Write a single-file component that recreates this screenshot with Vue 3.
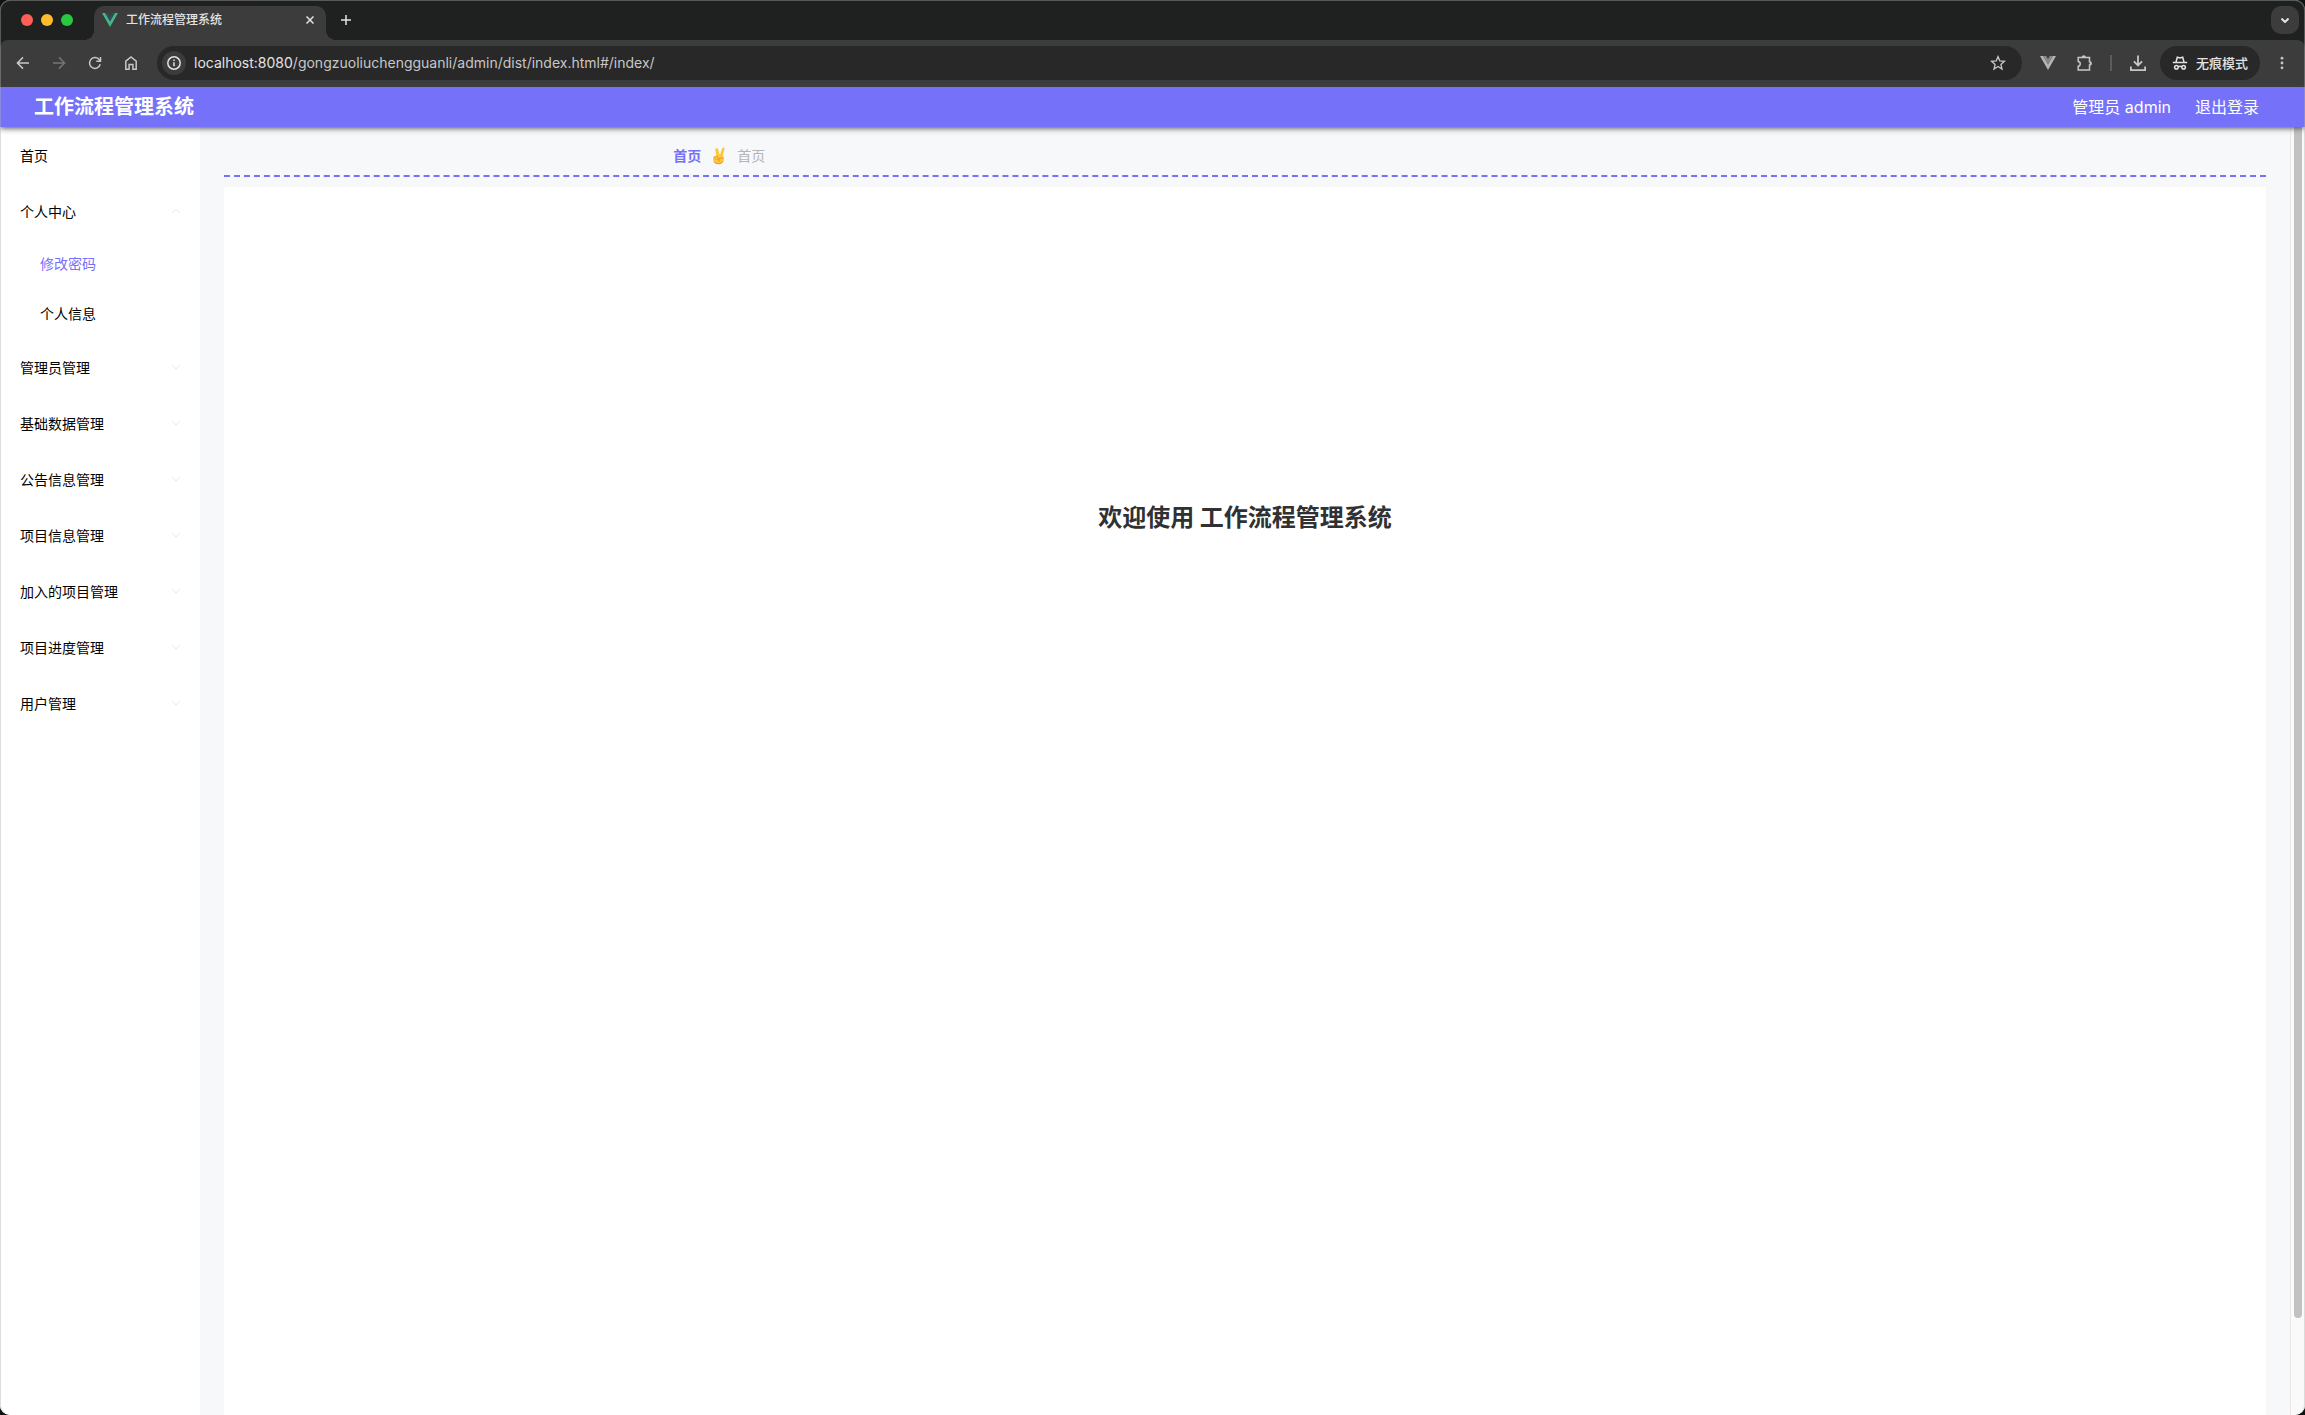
<template>
  <div class="desktop">
    <div class="window">
      <div class="tab-strip">
        <div class="lights">
          <button class="light red" type="button" aria-label="Close window"></button>
          <button class="light yellow" type="button" aria-label="Minimize window"></button>
          <button class="light green" type="button" aria-label="Zoom window"></button>
        </div>
        <div class="tab">
          <svg class="tab-logo" viewBox="0 0 16 14">
            <path d="M0 0h3.2L8 8.3 12.8 0H16L8 14z" fill="#41b883" />
            <path d="M3.2 0h3L8 3.2 9.8 0h3L8 8.3z" fill="#35495e" />
          </svg>
          <span class="tab-title">{{ systemName }}</span>
          <button class="tab-close" type="button" aria-label="Close tab">
            <svg width="8" height="8" viewBox="0 0 8 8">
              <path d="M.5.5l7 7M7.5.5l-7 7" />
            </svg>
          </button>
        </div>
        <button class="new-tab" type="button" aria-label="New tab">
          <svg width="10" height="10" viewBox="0 0 10 10">
            <path d="M5 0v10M0 5h10" />
          </svg>
        </button>
        <button class="tab-search" type="button" aria-label="Search tabs">
          <svg width="8" height="5" viewBox="0 0 8 5">
            <path d="M.5.5L4 4 7.5.5" />
          </svg>
        </button>
      </div>

      <div class="toolbar-wrap">
        <div class="toolbar">
          <button class="tool" type="button" aria-label="Back">
            <svg width="16" height="16" viewBox="0 0 16 16">
              <path d="M14 8H2.8M8 2.4L2.4 8 8 13.6" />
            </svg>
          </button>
          <button class="tool disabled" type="button" aria-label="Forward" disabled>
            <svg width="16" height="16" viewBox="0 0 16 16">
              <path d="M2 8h11.2M8 2.4L13.6 8 8 13.6" />
            </svg>
          </button>
          <button class="tool" type="button" aria-label="Reload">
            <svg width="16" height="16" viewBox="0 0 16 16">
              <path d="M13.2 9.3a5.4 5.4 0 1 1-1.3-5l1.6 1.6M13.5 2v4.2H9.3" />
            </svg>
          </button>
          <button class="tool" type="button" aria-label="Home">
            <svg width="16" height="16" viewBox="0 0 16 16">
              <path d="M2.8 14.2V6.1L8 2l5.2 4.1v8.1H9.9V9.4H6.1v4.8z" />
            </svg>
          </button>
          <div class="address">
            <button class="site-info" type="button" aria-label="Site information">
              <svg width="14" height="14" viewBox="0 0 14 14">
                <circle cx="7" cy="7" r="6.2" />
                <path d="M7 6.3v4M7 3.5v1.5" />
              </svg>
            </button>
            <div class="url"><span class="host">localhost:8080</span>/gongzuoliuchengguanli/admin/dist/index.html#/index/</div>
            <button class="tool star" type="button" aria-label="Bookmark">
              <svg width="16" height="16" viewBox="0 0 16 16">
                <path d="M8 1.6l1.8 4.3 4.7.4-3.6 3.1 1.1 4.6L8 11.5 4 14l1.1-4.6-3.6-3.1 4.7-.4z" />
              </svg>
            </button>
          </div>
          <button class="tool" type="button" aria-label="Vue devtools">
            <svg class="filled" width="16" height="14" viewBox="0 0 16 14">
              <path d="M0 0h3.2L8 8.3 12.8 0H16L8 14z" fill="#b4b4b4" />
              <path d="M3.2 0h3L8 3.2 9.8 0h3L8 8.3z" fill="#8a8a8a" />
            </svg>
          </button>
          <button class="tool" type="button" aria-label="Extensions">
            <svg width="18" height="18" viewBox="0 0 18 18">
              <path d="M3.2 3.6h11.3v4.2c2 0 2 3.2 0 3.2v4.9H3.2v-3.7c2.7-.2 2.7-4.6 0-4.8z" />
              <path class="solid" d="M6.7 3.4c0-2.9 4.2-2.9 4.2 0zM14.7 7.4c2.7 0 2.7 4 0 4z" />
            </svg>
          </button>
          <span class="divider"></span>
          <button class="tool download" type="button" aria-label="Downloads">
            <svg width="18" height="18" viewBox="0 0 18 18">
              <path d="M9 1.5v9.7M4.9 7.3L9 11.4l4.1-4.1M1.9 12.6v3.5h14.2v-3.5" />
            </svg>
          </button>
          <button class="incognito" type="button">
            <svg width="16" height="16" viewBox="0 0 16 16">
              <path d="M.8 7.6h14.4M3.9 7.4l1.4-5.2 2.7.8 2.7-.8 1.4 5.2M6.2 11.9c1-.7 2.6-.7 3.6 0" />
              <circle cx="4.4" cy="12.2" r="1.8" />
              <circle cx="11.6" cy="12.2" r="1.8" />
            </svg>
            无痕模式
          </button>
          <button class="tool menu-dots" type="button" aria-label="Menu">
            <svg class="filled" width="4" height="14" viewBox="0 0 4 14">
              <circle cx="2" cy="2.2" r="1.4" />
              <circle cx="2" cy="7" r="1.4" />
              <circle cx="2" cy="11.8" r="1.4" />
            </svg>
          </button>
        </div>
      </div>

      <header class="navbar">
        <h1 class="title">{{ systemName }}</h1>
        <div class="user">管理员 admin</div>
        <button class="logout" type="button">退出登录</button>
      </header>

      <div class="page">
        <nav class="sidebar">
          <a class="menu-item" href="#/index/">首页</a>
          <div v-for="menu in menus" :key="menu.name">
            <button
              class="menu-item"
              type="button"
              :aria-expanded="menu.name === openMenu"
              @click="toggleMenu(menu.name)"
            >
              {{ menu.name }}
              <svg
                class="arrow"
                :class="{ open: menu.name === openMenu }"
                width="10"
                height="6"
                viewBox="0 0 10 6"
              >
                <path d="M1 1l4 4 4-4" />
              </svg>
            </button>
            <template v-if="menu.name === openMenu">
              <a
                v-for="child in menu.children"
                :key="child"
                class="sub-item"
                :class="{ active: child === activeItem }"
                href="#/index/"
                @click.prevent="activeItem = child"
                >{{ child }}</a
              >
            </template>
          </div>
        </nav>

        <main class="main">
          <div class="breadcrumb">
            <a class="crumb-home" href="#/index/">首页</a>
            <svg class="hand" width="14" height="18" viewBox="0 0 14 18">
              <path
                d="M4.4 1.3c.9-.4 1.6.1 1.8.9l1.2 5 .9-.1 1.8-5.7c.3-.8 1-1.1 1.7-.8.7.2.9.9.7 1.6l-1.7 6.3c1 .8 1.4 1.9 1.2 3.4-.2 3.2-2.1 5.4-5.3 5.4-3.1 0-5.3-1.7-5.6-4.4-.2-1.5.1-2.9 1.2-3.5l2-.8-1.1-5.8c-.1-.7.4-1.3 1.2-1.5z"
                fill="#fdc83c"
              />
              <path
                d="M2.3 9.6l1.6 2.7M4.7 8.9l1.5 2.5M5 12.9c1.2-1.7 3.3-2.1 5.4-1.7M7.8 11.5c-.9 1.1-1 2.1-.8 3.1M2 15c2 2.2 6.4 2.4 8.6-.2"
                fill="none"
                stroke="#dd9030"
                stroke-width=".8"
                stroke-linecap="round"
              />
            </svg>
            <span class="crumb-current">首页</span>
          </div>
          <section class="content">
            <h2>欢迎使用 {{ systemName }}</h2>
          </section>
        </main>

        <div class="scrollbar">
          <div class="thumb"></div>
        </div>
      </div>
    </div>
  </div>
</template>

<script setup>
import { ref } from "vue";

const systemName = "工作流程管理系统";

const menus = [
  { name: "个人中心", children: ["修改密码", "个人信息"] },
  { name: "管理员管理" },
  { name: "基础数据管理" },
  { name: "公告信息管理" },
  { name: "项目信息管理" },
  { name: "加入的项目管理" },
  { name: "项目进度管理" },
  { name: "用户管理" }
];

const openMenu = ref("个人中心");
const activeItem = ref("修改密码");

function toggleMenu(name) {
  openMenu.value = openMenu.value === name ? "" : name;
}
</script>

<style>
body {
  margin: 0;
  background: #0c1512;
}
</style>

<style scoped>
.desktop {
  font-family: Inter, "Noto Sans CJK SC", sans-serif;
  font-size: 14px;
  color: #000;
}

.desktop * {
  box-sizing: border-box;
}

.window {
  position: relative;
  display: flex;
  flex-direction: column;
  min-height: 100vh;
  border-radius: 10px;
  overflow: hidden;
  background: #fff;
}

/* hairline around the window */
.window::after {
  content: "";
  position: absolute;
  inset: 0;
  z-index: 3;
  border: 1px solid rgba(170, 175, 172, 0.4);
  border-bottom: 0;
  border-radius: 10px;
  pointer-events: none;
}

button {
  margin: 0;
  padding: 0;
  border: 0;
  background: none;
  font: inherit;
  color: inherit;
  cursor: pointer;
}

a {
  color: inherit;
  text-decoration: none;
}

svg {
  flex: none;
  fill: none;
  stroke: currentColor;
  stroke-width: 1.5;
}

svg.filled {
  fill: currentColor;
  stroke: none;
}

.tab-strip {
  display: flex;
  align-items: center;
  height: 40px;
  padding-right: 6px;
  background: #1f2120;
  color: #e3e3e3;
}

.lights {
  display: flex;
  gap: 8px;
  width: 94px;
  padding-left: 21px;
}

.light {
  width: 12px;
  height: 12px;
  border-radius: 50%;
}

.red {
  background: #ff5f57;
}

.yellow {
  background: #febc2e;
}

.green {
  background: #28c840;
}

.tab {
  position: relative;
  display: flex;
  align-items: center;
  align-self: flex-end;
  width: 232px;
  height: 34px;
  padding: 0 8px 6px;
  border-radius: 10px 10px 0 0;
  background: #3c3c3c;
}

/* flared feet of the active tab */
.tab::before,
.tab::after {
  content: "";
  position: absolute;
  bottom: 0;
  width: 10px;
  height: 10px;
}

.tab::before {
  right: 100%;
  background: radial-gradient(circle at 0 0, transparent 10px, #3c3c3c 10px);
}

.tab::after {
  left: 100%;
  background: radial-gradient(circle at 100% 0, transparent 10px, #3c3c3c 10px);
}

.tab-logo {
  width: 16px;
  height: 14px;
  stroke: none;
}

.tab-title {
  flex: 1;
  margin-left: 8px;
  font-size: 12px;
  line-height: 16px;
  font-weight: 500;
}

.tab-close,
.new-tab {
  display: flex;
  align-items: center;
  justify-content: center;
  width: 16px;
  height: 16px;
}

.new-tab {
  margin-left: 12px;
}

.tab-search {
  display: flex;
  align-items: center;
  justify-content: center;
  width: 28px;
  height: 28px;
  margin-left: auto;
  border-radius: 10px;
  background: #3c3c3c;
}

.tab-search svg {
  stroke-width: 2;
}

.toolbar-wrap {
  background: #1f2120;
}

.toolbar {
  display: flex;
  align-items: center;
  height: 47px;
  padding: 0 5px 2px;
  border-radius: 8px 8px 0 0;
  background: #3c3c3c;
  color: #c7c7c7;
}

.tool {
  display: flex;
  flex: none;
  align-items: center;
  justify-content: center;
  width: 36px;
  height: 36px;
}

.tool .solid {
  fill: currentColor;
  stroke: none;
}

.disabled {
  color: #757575;
}

.address {
  display: flex;
  flex: 1;
  align-items: center;
  height: 34px;
  margin: 0 8px;
  padding: 0 6px 0 5px;
  border-radius: 17px;
  background: #282828;
}

.site-info {
  display: flex;
  align-items: center;
  justify-content: center;
  width: 24px;
  height: 24px;
  border-radius: 50%;
  background: #3c3c3c;
  color: #e3e3e3;
}

.url {
  flex: 1;
  margin-left: 8px;
  line-height: 20px;
}

.host {
  color: #e3e3e3;
}

.star svg {
  stroke-width: 1.3;
}

.divider {
  width: 2px;
  height: 16px;
  margin: 0 8px;
  background: #5c5c5c;
}

.download svg {
  stroke-width: 1.8;
}

.incognito {
  display: flex;
  align-items: center;
  gap: 8px;
  height: 34px;
  margin: 0 4px;
  padding: 0 12px;
  border-radius: 17px;
  background: #282828;
  color: #e3e3e3;
  font-size: 13px;
  font-weight: 500;
}

.navbar {
  position: relative;
  z-index: 2;
  display: flex;
  align-items: center;
  gap: 24px;
  height: 40px;
  padding: 0 46px 0 34px;
  background: #7571f9;
  box-shadow: 0 1px 6px #444;
  color: #fff;
  font-size: 16px;
  line-height: 22px;
}

.title {
  flex: 1;
  margin: 0;
  font-size: 20px;
  font-weight: 700;
  line-height: 28px;
}

.page {
  display: flex;
  flex: 1;
}

.sidebar {
  width: 200px;
  background: #fff;
}

.menu-item {
  display: flex;
  align-items: center;
  justify-content: space-between;
  width: 100%;
  height: 56px;
  padding: 0 19px 0 20px;
  text-align: left;
}

.arrow {
  color: #e6e6e6;
  stroke-width: 1;
}

.arrow.open {
  transform: rotate(180deg);
}

.sub-item {
  display: block;
  padding-left: 40px;
  line-height: 50px;
}

.active {
  color: #7571f9;
}

.main {
  display: flex;
  flex: 1;
  flex-direction: column;
  padding: 0 24px;
  background: #f6f8fa;
}

.breadcrumb {
  display: flex;
  align-items: center;
  gap: 11px;
  height: 50px;
  margin-bottom: 10px;
  padding: 10px 0 0 22%;
  border-bottom: 2px dashed #7571f9;
  line-height: 20px;
}

.crumb-home {
  color: #7571f9;
  font-weight: 700;
}

.crumb-current {
  color: #b4b4b4;
}

.hand {
  stroke: none;
}

.content {
  flex: 1;
  background: #fff;
}

.content h2 {
  margin: 313px 0 0;
  color: #303133;
  font-size: 24px;
  font-weight: 700;
  line-height: 36px;
  text-align: center;
}

.scrollbar {
  width: 15px;
  padding-left: 3px;
  border-left: 1px solid #e8e8e8;
  background: #fafafa;
}

.thumb {
  width: 8px;
  height: 92.5%;
  border-radius: 0 0 4px 4px;
  background: #c1c1c1;
}
</style>
